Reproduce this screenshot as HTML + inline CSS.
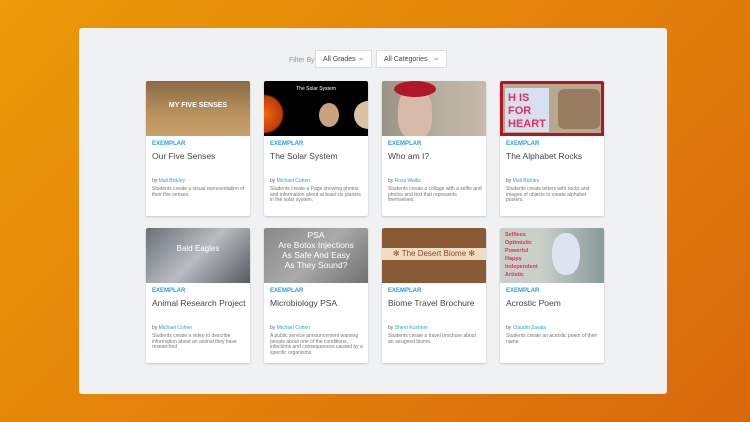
<!DOCTYPE html>
<html><head><style>
*{margin:0;padding:0;box-sizing:border-box}
body{width:750px;height:422px;overflow:hidden;background:linear-gradient(135deg,#eb9a08 0%,#e3820a 50%,#d8680c 100%);font-family:"Liberation Sans",sans-serif;position:relative}
.panel{position:absolute;left:79px;top:28px;width:588px;height:366px;background:#f0f1f3;border-radius:3px}
.fl{position:absolute;left:289px;top:57px;font-size:7px;color:#999}
.dd{position:absolute;top:50px;height:18px;background:#fff;border:1px solid #ddd;font-size:7px;color:#444;padding:5px 0 0 7px}
.dd:after{content:"⌄";position:absolute;right:6px;top:1px;color:#888;font-size:9px}
.card{position:absolute;width:104px;height:135px;background:#fff;border-radius:2px;box-shadow:0 1px 2px rgba(0,0,0,.18);overflow:hidden}
.img{height:55px;position:relative;overflow:hidden}
.ex{position:absolute;left:6px;top:60px;font-size:6px;font-weight:bold;color:#2d9ee0}
.t{position:absolute;left:6px;top:70px;font-size:8.5px;color:#444;white-space:nowrap}
.by{position:absolute;left:6px;top:97px;font-size:5px;color:#666}
.by span{color:#2d9ee0}
.d{position:absolute;left:6px;top:106px;width:94px;font-size:5px;line-height:5.6px;color:#777}
.it{position:absolute;color:#fff;font-size:7px;text-align:center;width:100%}
</style></head><body>
<div class="panel"></div>
<div class="fl">Filter By:</div>
<div class="dd" style="left:315px;width:57px">All Grades</div>
<div class="dd" style="left:376px;width:71px">All Categories</div>

<div class="card" style="left:146px;top:81px"><div class="img" style="background:linear-gradient(180deg,#8a6a45,#b8925e 60%,#c9a06a)"><div class="it" style="top:21px;font-weight:bold;font-size:7px">MY FIVE SENSES</div></div><div class="ex">EXEMPLAR</div><div class="t">Our Five Senses</div><div class="by">by <span>Mali Bickley</span></div><div class="d">Students create a visual representation of their five senses.</div></div>

<div class="card" style="left:264px;top:81px"><div class="img" style="background:radial-gradient(circle at 0% 60%,#f06a10 0,#c03a08 18px,#000 20px)"><div class="it" style="top:5px;font-size:5px">The Solar System</div><div style="position:absolute;left:90px;top:20px;width:28px;height:28px;border-radius:50%;background:#d8c2a0"></div><div style="position:absolute;left:55px;top:22px;width:20px;height:24px;border-radius:50%;background:#c9a37d"></div></div><div class="ex">EXEMPLAR</div><div class="t">The Solar System</div><div class="by">by <span>Michael Cohen</span></div><div class="d">Students create a Page showing photos and information about at least six planets in the solar system.</div></div>

<div class="card" style="left:382px;top:81px"><div class="img" style="background:linear-gradient(90deg,#9a9486,#b8b0a0 60%,#c8b8a8)"><div style="position:absolute;left:16px;top:8px;width:34px;height:50px;border-radius:40%;background:#d8b8a8"></div><div style="position:absolute;left:12px;top:0;width:42px;height:16px;border-radius:50%;background:#b01828"></div></div><div class="ex">EXEMPLAR</div><div class="t">Who am I?</div><div class="by">by <span>Ross Wallis</span></div><div class="d">Students create a collage with a selfie and photos and text that represents themselves.</div></div>

<div class="card" style="left:500px;top:81px"><div class="img" style="background:#b8a890;border:3px solid #b01828"><div style="position:absolute;left:2px;top:4px;width:44px;height:44px;background:#d8e0f0;color:#e03060;font-weight:bold;font-size:11px;line-height:13px;padding:4px 0 0 3px;white-space:nowrap;overflow:hidden">H IS<br>FOR<br>HEART</div><div style="position:absolute;left:55px;top:5px;width:42px;height:40px;background:#8a6a4a;opacity:.7;border-radius:6px"></div></div><div class="ex">EXEMPLAR</div><div class="t">The Alphabet Rocks</div><div class="by">by <span>Mali Bickley</span></div><div class="d">Students create letters with rocks and images of objects to create alphabet posters.</div></div>

<div class="card" style="left:146px;top:228px"><div class="img" style="background:linear-gradient(135deg,#6a7078,#b8bcc0 50%,#555a60)"><div class="it" style="top:16px;font-size:8px">Bald Eagles</div></div><div class="ex">EXEMPLAR</div><div class="t">Animal Research Project</div><div class="by">by <span>Michael Cohen</span></div><div class="d">Students create a video to describe information about an animal they have researched</div></div>

<div class="card" style="left:264px;top:228px"><div class="img" style="background:linear-gradient(135deg,#888,#aaa 50%,#707070)"><div class="it" style="top:2px;font-size:8.5px;line-height:10px">PSA<br>Are Botox Injections<br>As Safe And Easy<br>As They Sound?</div></div><div class="ex">EXEMPLAR</div><div class="t">Microbiology PSA</div><div class="by">by <span>Michael Cohen</span></div><div class="d">A public service announcement warning people about one of the conditions, infections and consequences caused by a specific organisms.</div></div>

<div class="card" style="left:382px;top:228px"><div class="img" style="background:#8a5a35"><div style="position:absolute;left:0;top:20px;width:104px;height:12px;background:#f0dcc0;color:#8a4a25;font-size:8px;text-align:center;line-height:12px">✻ The Desert Biome ✻</div></div><div class="ex">EXEMPLAR</div><div class="t">Biome Travel Brochure</div><div class="by">by <span>Sherri Kushner</span></div><div class="d">Students create a travel brochure about an assigned biome.</div></div>

<div class="card" style="left:500px;top:228px"><div class="img" style="background:linear-gradient(90deg,#c8d0c8 40%,#8a9a9a)"><div style="position:absolute;left:5px;top:3px;color:#e0306a;font-weight:bold;font-size:5.5px;line-height:8px">Selfless<br>Optimistic<br>Powerful<br>Happy<br>Independent<br>Artistic</div><div style="position:absolute;left:52px;top:5px;width:28px;height:42px;border-radius:45%;background:#dde4f0"></div></div><div class="ex">EXEMPLAR</div><div class="t">Acrostic Poem</div><div class="by">by <span>Claudio Zavala</span></div><div class="d">Students create an acrostic poem of their name</div></div>
</body></html>
